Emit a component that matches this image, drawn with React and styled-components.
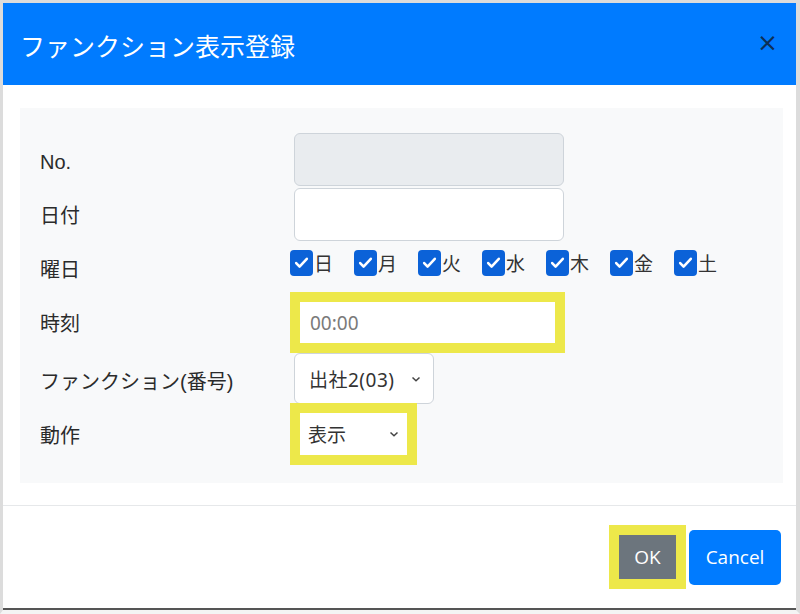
import React from 'react'
import styled, { createGlobalStyle } from 'styled-components'

const GlobalStyle = createGlobalStyle`
  html, body {
    margin: 0;
    padding: 0;
    background: #ffffff;
  }
  body {
    font-family: "Liberation Sans", "Noto Sans CJK JP", sans-serif;
    color: #333;
  }
`

const days = ['日', '月', '火', '水', '木', '金', '土']

const Frame = styled.div`
  width: 800px;
  height: 614px;
  box-sizing: border-box;
  border: 3px solid #dcdcdc;
  border-right-width: 4px;
  border-bottom: 4px solid #f4f4f4;
  background: #fff;
`

const Modal = styled.div`
  display: flex;
  flex-direction: column;
  height: 100%;
  box-sizing: border-box;
  border-bottom: 2px solid #555;
`

const Header = styled.div`
  display: flex;
  align-items: center;
  justify-content: space-between;
  height: 82px;
  padding: 0 18px 0 17px;
  background: #007bff;
  flex-shrink: 0;
`

const Title = styled.h1`
  margin: 0;
  font-family: "Noto Sans CJK JP", sans-serif;
  font-size: 25px;
  font-weight: 400;
  color: #fff;
  padding-top: 2px;
`

const Close = styled.span`
  font-family: "DejaVu Sans", sans-serif;
  font-size: 25px;
  line-height: 1;
  color: #0d2f55;
  margin-top: -3px;
`

const Body = styled.div`
  padding: 23px 13px 22px 17px;
  border-bottom: 1px solid #e6e8ea;
`

const Panel = styled.div`
  background: #f8f9fa;
  padding: 25px 20px 18px 20px;
  display: grid;
  grid-template-columns: 254px 1fr;
  grid-template-rows: 54px 54px 44px 68px 50px 62px;
`

const Label = styled.div`
  align-self: center;
  font-size: 20px;
  color: #2b2b2b;
  padding-top: ${p => p.$drop || 0}px;
`

const Input = styled.div`
  box-sizing: border-box;
  width: ${p => p.$w || 270}px;
  height: ${p => p.$h || 53}px;
  border: 1px solid #ced4da;
  border-radius: 6px;
  background: ${p => (p.$disabled ? '#e9ecef' : '#fff')};
  align-self: start;
  display: flex;
  align-items: center;
  padding: 0 12px 0 14px;
  font-family: "Noto Sans", "Noto Sans CJK JP", sans-serif;
  font-size: 19px;
  color: ${p => (p.$muted ? '#7a7a7a' : '#333')};
`

const Highlight = styled.div`
  display: inline-flex;
  padding: 10px;
  background: #ede84a;
  margin-left: -4px;
  align-self: ${p => p.$align || 'center'};
  justify-self: start;
`

const Chevron = styled.span`
  margin-left: auto;
  display: inline-flex;
`

const Days = styled.div`
  display: flex;
  align-items: center;
  align-self: start;
  margin-left: -4px;
  padding-top: 8px;
`

const Day = styled.label`
  display: flex;
  align-items: center;
  width: 64px;
  font-family: "Noto Sans CJK JP", sans-serif;
  font-size: 19px;
  color: #333;
`

const Box = styled.span`
  box-sizing: border-box;
  width: 23px;
  height: 26px;
  border-radius: 4px;
  background: #0b62d8;
  display: inline-flex;
  align-items: center;
  justify-content: center;
  margin-right: 1px;
`

const Footer = styled.div`
  flex: 1;
  display: flex;
  align-items: center;
  justify-content: flex-end;
  gap: 3px;
  padding-right: 15px;
`

const Button = styled.button`
  border: none;
  border-radius: ${p => (p.$flat ? 0 : 5)}px;
  background: ${p => p.$bg};
  color: #fff;
  font-family: "Open Sans", sans-serif;
  font-size: 19px;
  width: ${p => p.$w}px;
  height: ${p => p.$h}px;
  padding: 0;
`

const Check = () => (
  <svg width="17" height="17" viewBox="0 0 16 16">
    <path d="M3 8.5l3.2 3.3L13 4.5" fill="none" stroke="#fff" strokeWidth="2.4" strokeLinecap="round" strokeLinejoin="round" />
  </svg>
)

const Caret = () => (
  <svg width="10" height="8" viewBox="0 0 10 8">
    <path d="M1.5 2.5l3.5 3.3 3.5-3.3" fill="none" stroke="#444" strokeWidth="1.5" />
  </svg>
)

export default function App() {
  return (
    <>
      <GlobalStyle />
      <Frame>
        <Modal>
          <Header>
            <Title>ファンクション表示登録</Title>
            <Close>×</Close>
          </Header>
          <Body>
            <Panel>
              <Label $drop={4}>No.</Label>
              <Input $disabled />

              <Label>日付</Label>
              <Input $h={53} style={{ marginTop: 1 }} />

              <Label $drop={10}>曜日</Label>
              <Days>
                {days.map(d => (
                  <Day key={d}>
                    <Box><Check /></Box>
                    {d}
                  </Day>
                ))}
              </Days>

              <Label $drop={6}>時刻</Label>
              <Highlight $align="end">
                <Input $w={255} $h={41} $muted style={{ borderRadius: 0, border: 'none', paddingLeft: 10 }}>00:00</Input>
              </Highlight>

              <Label $drop={4}>ファンクション(番号)</Label>
              <Input $w={140} $h={51} style={{ letterSpacing: '0.5px' }}>
                出社2(03)
                <Chevron><Caret /></Chevron>
              </Input>

              <Label>動作</Label>
              <Highlight $align="start">
                <Input $w={107} $h={42} style={{ borderRadius: 0, border: 'none', paddingLeft: 8, paddingRight: 8 }}>
                  表示
                  <Chevron><Caret /></Chevron>
                </Input>
              </Highlight>
            </Panel>
          </Body>
          <Footer>
            <Highlight>
              <Button $flat $bg="#6c757d" $w={57} $h={44}>OK</Button>
            </Highlight>
            <Button $bg="#007bff" $w={92} $h={55}>Cancel</Button>
          </Footer>
        </Modal>
      </Frame>
    </>
  )
}
